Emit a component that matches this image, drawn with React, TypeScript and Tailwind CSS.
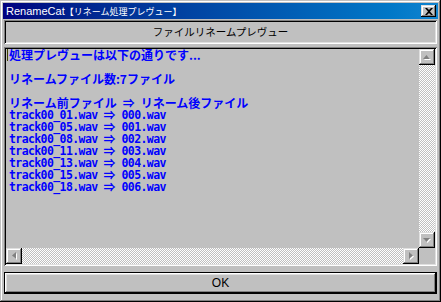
import React from "react";

const raised =
  "shadow-[inset_-1px_-1px_#000,inset_1px_1px_#dfdfdf,inset_-2px_-2px_#808080,inset_2px_2px_#fff]";
const sunken =
  "shadow-[inset_1px_1px_#808080,inset_-1px_-1px_#fff,inset_2px_2px_#000,inset_-2px_-2px_#dfdfdf]";
const checker =
  "bg-[image:repeating-conic-gradient(#c0c0c0_0_25%,#ffffff_0_50%)] bg-size-[2px_2px]";

function Arrow({ dir }: { dir: "up" | "down" | "left" | "right" }) {
  const pts: Record<string, string> = {
    up: "3.5,0 7,4 0,4",
    down: "0,0 7,0 3.5,4",
    left: "4,0 4,7 0,3.5",
    right: "0,0 4,3.5 0,7",
  };
  const vertical = dir === "up" || dir === "down";
  const w = vertical ? 7 : 4;
  const h = vertical ? 4 : 7;
  return (
    <svg width={w + 1} height={h + 1} viewBox={`0 0 ${w + 1} ${h + 1}`}>
      <polygon points={pts[dir]} fill="#ffffff" transform="translate(1,1)" />
      <polygon points={pts[dir]} fill="#808080" />
    </svg>
  );
}

function SBtn({ dir }: { dir: "up" | "down" | "left" | "right" }) {
  return (
    <div className={`w-[16px] h-[16px] shrink-0 bg-[#c0c0c0] flex items-center justify-center ${raised}`}>
      <Arrow dir={dir} />
    </div>
  );
}

const tracks: [string, string][] = [
  ["track00_01.wav", "000.wav"],
  ["track00_05.wav", "001.wav"],
  ["track00_08.wav", "002.wav"],
  ["track00_11.wav", "003.wav"],
  ["track00_13.wav", "004.wav"],
  ["track00_15.wav", "005.wav"],
  ["track00_18.wav", "006.wav"],
];

function Row({ children }: { children: React.ReactNode }) {
  return <div className="h-[12px] whitespace-nowrap flex items-center pl-[2px]">{children}</div>;
}

export default function App() {
  return (
    <div className="w-[441px] h-[302px] bg-[#c0c0c0] p-[3px] flex flex-col shadow-[inset_-1px_-1px_#000,inset_1px_1px_#c0c0c0,inset_-2px_-2px_#808080,inset_2px_2px_#fff]">
      {/* Title bar */}
      <div className="h-[16px] w-[435px] flex items-center justify-between bg-gradient-to-r from-[#000080] to-[#1084d0] pl-[3px] pr-[2px]">
        <div className="text-white whitespace-nowrap leading-[16px] font-['Liberation_Sans','Noto_Sans_CJK_JP',sans-serif] text-[11px]">
          RenameCat
          <span className="text-[9px] font-['Noto_Sans_CJK_JP',sans-serif]">【リネーム処理プレヴュー】</span>
        </div>
        <div className={`w-[15px] h-[12px] bg-[#c0c0c0] flex items-center justify-center ${raised}`}>
          <svg width="8" height="7" viewBox="0 0 8 7">
            <path d="M0 0h2l2 2 2-2h2L5 3.5 8 7H6L4 5 2 7H0l3-3.5z" fill="#000" />
          </svg>
        </div>
      </div>

      {/* Header */}
      <div
        className={`mt-[1px] ml-[1px] w-[433px] h-[24px] flex items-center justify-center text-black text-[10.5px] font-['Noto_Sans_CJK_JP',sans-serif] ${sunken}`}
      >
        ファイルリネームプレヴュー
      </div>

      {/* Text area */}
      <div className={`mt-[3px] ml-[1px] w-[433px] h-[219px] p-[2px] flex flex-col ${sunken}`}>
        <div className="flex flex-1 min-h-0">
          <div className="flex-1 min-w-0 overflow-hidden pl-[1px] text-[#0000ff] font-bold text-[12px] leading-[12px] font-['Noto_Sans_CJK_JP',sans-serif]">
            <div className="h-[12px] whitespace-nowrap flex items-center">
              <span className="inline-block w-[1px] h-[12px] bg-[#404000] mr-[1px]" />
              処理プレヴューは以下の通りです...
            </div>
            <div className="h-[12px]" />
            <Row>リネームファイル数:7ファイル</Row>
            <div className="h-[12px]" />
            <Row>
              リネーム前ファイル
              <span className="ml-[6px] mr-[6px]">⇒</span>
              リネーム後ファイル
            </Row>
            {tracks.map(([a, b]) => (
              <Row key={a}>
                <span className="font-['DejaVu_Sans_Mono',monospace] text-[11.5px] tracking-[-0.6px]">{a}</span>
                <span className="ml-[6px] mr-[6px]">⇒</span>
                <span className="font-['DejaVu_Sans_Mono',monospace] text-[11.5px] tracking-[-0.6px]">{b}</span>
              </Row>
            ))}
          </div>
          <div className="w-[16px] flex flex-col">
            <SBtn dir="up" />
            <div className={`flex-1 ${checker}`} />
            <SBtn dir="down" />
          </div>
        </div>
        <div className="flex h-[16px]">
          <SBtn dir="left" />
          <div className={`flex-1 ${checker}`} />
          <SBtn dir="right" />
          <div className="w-[16px] h-[16px] bg-[#c0c0c0]" />
        </div>
      </div>

      {/* OK button */}
      <div className="mt-[6px] ml-[1px] w-[433px] h-[22px] border border-black flex items-center justify-center text-black text-[12px] font-['Liberation_Sans',sans-serif] shadow-[inset_-1px_-1px_#000,inset_1px_1px_#fff,inset_-2px_-2px_#808080,inset_2px_2px_#dfdfdf]">
        OK
      </div>
    </div>
  );
}
